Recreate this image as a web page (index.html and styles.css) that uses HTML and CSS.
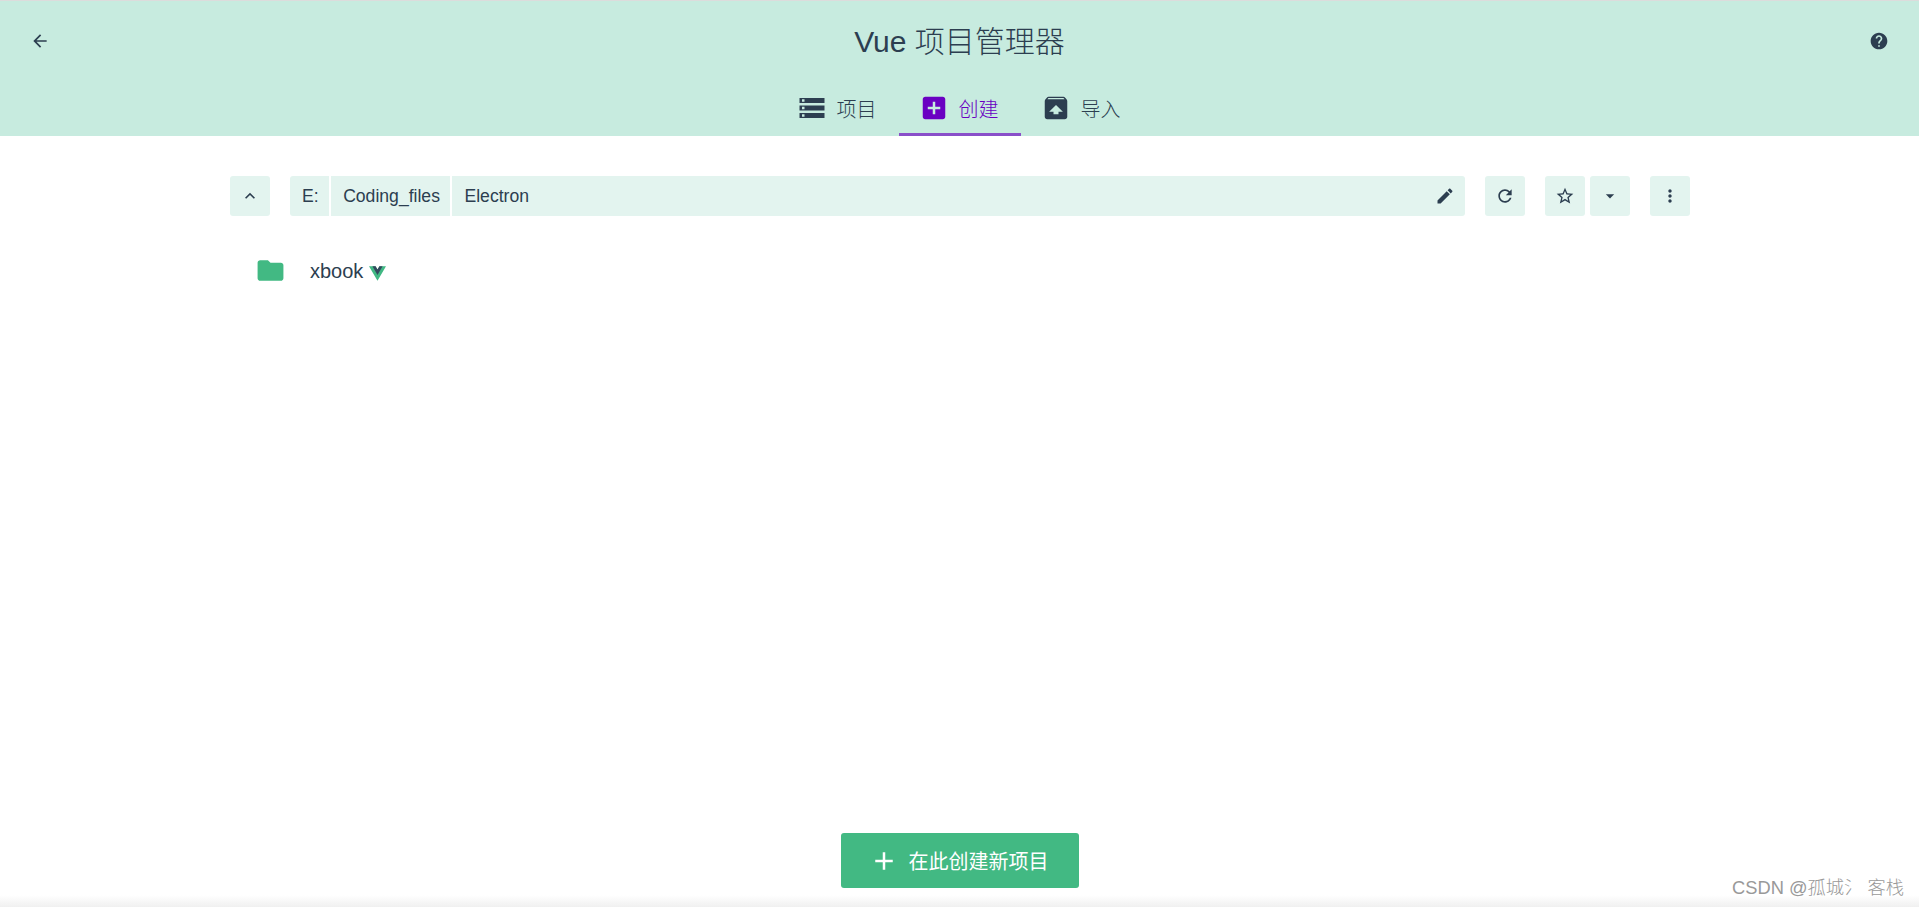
FILE: index.html
```html
<!DOCTYPE html>
<html lang="en">
<head>
  <meta charset="UTF-8">
  <title>Vue 项目管理器</title>
  <link rel="stylesheet" href="styles.css">
</head>
<body>

<div class="page">
  <header class="header">
    <div class="title-row">
      <svg class="icon-20" viewBox="0 0 24 24"><path d="M20 11H7.83l5.59-5.59L12 4l-8 8 8 8 1.41-1.41L7.83 13H20v-2z"/></svg>
      <h1>Vue 项目管理器</h1>
      <svg class="icon-20" viewBox="0 0 24 24"><path d="M12 2C6.48 2 2 6.48 2 12s4.48 10 10 10 10-4.48 10-10S17.52 2 12 2zm1 17h-2v-2h2v2zm2.07-7.75l-.9.92C13.45 12.9 13 13.5 13 15h-2v-.5c0-1.1.45-2.1 1.17-2.83l1.24-1.26c.37-.36.59-.86.59-1.41 0-1.1-.9-2-2-2s-2 .9-2 2H8c0-2.21 1.79-4 4-4s4 1.79 4 4c0 .88-.36 1.68-.93 2.25z"/></svg>
    </div>
    <nav class="tabs">
      <div class="tab">
        <svg class="tab-icon" viewBox="0 0 24 24"><path d="M2 20h20v-4H2v4zm2-3h2v2H4v-2zM2 4v4h20V4H2zm4 3H4V5h2v2zm-4 7h20v-4H2v4zm2-3h2v2H4v-2z"/></svg>
        <span>项目</span>
      </div>
      <div class="tab active">
        <svg class="tab-icon" viewBox="0 0 24 24"><path d="M19 3H5c-1.11 0-2 .9-2 2v14c0 1.1.89 2 2 2h14c1.1 0 2-.9 2-2V5c0-1.1-.9-2-2-2zm-2 10h-4v4h-2v-4H7v-2h4V7h2v4h4v2z"/></svg>
        <span>创建</span>
      </div>
      <div class="tab">
        <svg class="tab-icon" viewBox="0 0 24 24"><path d="M20.55 5.22l-1.39-1.68C18.88 3.21 18.47 3 18 3H6c-.47 0-.88.21-1.15.55L3.46 5.22C3.17 5.57 3 6.01 3 6.5V19c0 1.1.89 2 2 2h14c1.1 0 2-.9 2-2V6.5c0-.49-.17-.93-.45-1.28zM12 9.5l5.5 5.5H14v2h-4v-2H6.5L12 9.5zM5.12 5l.82-1h12l.93 1H5.12z"/></svg>
        <span>导入</span>
      </div>
    </nav>
  </header>

  <main class="content">
    <div class="toolbar">
      <div class="btn">
        <svg class="icon-20" viewBox="0 0 24 24"><path d="M7.41 15.41L12 10.83l4.59 4.58L18 14l-6-6-6 6z"/></svg>
      </div>
      <div class="path-bar">
        <div class="crumb first">E:</div>
        <div class="crumb">Coding_files</div>
        <div class="crumb last">
          <span>Electron</span>
          <svg class="icon-20" viewBox="0 0 24 24"><path d="M3 17.25V21h3.75L17.81 9.94l-3.75-3.75L3 17.25zM20.71 7.04c.39-.39.39-1.02 0-1.41l-2.34-2.34c-.39-.39-1.02-.39-1.41 0l-1.83 1.83 3.75 3.75 1.83-1.83z"/></svg>
        </div>
      </div>
      <div class="btn">
        <svg class="icon-20" viewBox="0 0 24 24"><path d="M17.65 6.35C16.2 4.9 14.21 4 12 4c-4.42 0-7.99 3.58-7.99 8s3.57 8 7.99 8c3.73 0 6.84-2.55 7.73-6h-2.08c-.82 2.33-3.04 4-5.65 4-3.31 0-6-2.69-6-6s2.69-6 6-6c1.66 0 3.14.69 4.22 1.78L13 11h7V4l-2.35 2.35z"/></svg>
      </div>
      <div class="btn-group">
        <div class="btn">
          <svg class="icon-20" viewBox="0 0 24 24"><path d="M22 9.24l-7.19-.62L12 2 9.19 8.63 2 9.24l5.46 4.73L5.82 21 12 17.27 18.18 21l-1.63-7.03L22 9.24zM12 15.4l-3.76 2.27 1-4.28-3.32-2.88 4.38-.38L12 6.1l1.71 4.04 4.38.38-3.32 2.88 1 4.28L12 15.4z"/></svg>
        </div>
        <div class="btn">
          <svg class="icon-20" viewBox="0 0 24 24"><path d="M7 10l5 5 5-5z"/></svg>
        </div>
      </div>
      <div class="btn">
        <svg class="icon-20" viewBox="0 0 24 24"><path d="M12 8c1.1 0 2-.9 2-2s-.9-2-2-2-2 .9-2 2 .9 2 2 2zm0 2c-1.1 0-2 .9-2 2s.9 2 2 2 2-.9 2-2-.9-2-2-2zm0 6c-1.1 0-2 .9-2 2s.9 2 2 2 2-.9 2-2-.9-2-2-2z"/></svg>
      </div>
    </div>

    <div class="folder-row">
      <svg class="folder-icon" viewBox="0 0 24 24"><path d="M10 4H4c-1.1 0-1.99.9-1.99 2L2 18c0 1.1.9 2 2 2h16c1.1 0 2-.9 2-2V8c0-1.1-.9-2-2-2h-8l-2-2z"/></svg>
      <span class="folder-name">xbook</span>
      <svg class="vue-logo" viewBox="0 0 261.76 226.69">
        <path fill="#41b883" d="M161.096.001l-30.225 52.351L100.647.001H-.005l130.876 226.688L261.749.001z"/>
        <path fill="#34495e" d="M161.096.001l-30.225 52.351L100.647.001H52.346l78.525 136.01L209.398.001z"/>
      </svg>
    </div>
  </main>

  <footer class="footer">
    <div class="create-btn">
      <svg class="create-icon" viewBox="0 0 24 24"><path d="M19 13h-6v6h-2v-6H5v-2h6V5h2v6h6v2z"/></svg>
      <span>在此创建新项目</span>
    </div>
  </footer>

  <div class="watermark">CSDN @孤城氵 客栈</div>
</div>

</body>
</html>
```

FILE: styles.css
```css
* {
  box-sizing: border-box;
}
html, body {
  height: 100%;
  margin: 0;
}
body {
  font-family: "Liberation Sans", "Noto Sans CJK SC", sans-serif;
  font-weight: 300;
  color: #2c3e50;
  background: white;
  overflow: hidden;
}
svg {
  fill: currentColor;
  display: block;
  flex: none;
}
.icon-20 {
  width: 20px;
  height: 20px;
}
.page {
  position: relative;
  height: 100vh;
  display: flex;
  flex-direction: column;
}

.header {
  background: #c7ebdf;
  border-top: 1px solid #dcdcdc;
  height: 136px;
  flex: none;
}
.title-row {
  height: 80px;
  padding: 0 30px;
  display: flex;
  align-items: center;
  justify-content: space-between;
}
h1 {
  margin: 0 0 4px;
  font-size: 30px;
  font-weight: 300;
}
.tabs {
  display: flex;
  justify-content: center;
  height: 55px;
}
.tab {
  width: 122px;
  padding: 2px 22px 0 20px;
  display: flex;
  align-items: center;
  gap: 10px;
  font-size: 20px;
  border-bottom: 3px solid transparent;
}
.tab-icon {
  width: 30px;
  height: 30px;
}
.tab.active {
  color: #6a00c2;
  border-bottom-color: #8a4fc9;
}

.content {
  flex: 1;
  padding: 40px 229px 0 230px;
}
.toolbar {
  display: flex;
  gap: 20px;
}
.btn {
  width: 40px;
  height: 40px;
  background: #e3f4ef;
  border-radius: 3px;
  display: flex;
  align-items: center;
  justify-content: center;
  flex: none;
}
.btn-group {
  display: flex;
  gap: 5px;
}
.path-bar {
  flex: 1;
  display: flex;
  gap: 2px;
}
.crumb {
  background: #e3f4ef;
  height: 40px;
  padding: 0 10.5px 0 12px;
  font-size: 17.6px;
  display: flex;
  align-items: center;
}
.crumb.first {
  border-radius: 3px 0 0 3px;
}
.crumb.last {
  flex: 1;
  justify-content: space-between;
  padding-right: 10px;
  border-radius: 0 3px 3px 0;
}

.folder-row {
  display: flex;
  align-items: center;
  height: 31px;
  margin-top: 39px;
  padding-left: 25px;
}
.folder-icon {
  width: 31px;
  height: 31px;
  color: #42b983;
}
.folder-name {
  margin: 1px 0 0 24px;
  font-size: 20px;
}
.vue-logo {
  width: 17px;
  height: 15px;
  margin: 6px 0 0 6px;
}

.footer {
  flex: none;
  height: 74px;
  display: flex;
  justify-content: center;
  background: linear-gradient(to bottom, white 84%, #f0f0f0);
}
.create-btn {
  width: 238px;
  height: 55px;
  background: #42b983;
  border-radius: 3px;
  color: white;
  font-size: 20px;
  font-weight: 400;
  display: flex;
  align-items: center;
  gap: 15px;
  padding-left: 28px;
}
.create-icon {
  width: 30px;
  height: 30px;
  margin-right: -5px;
}

.watermark {
  position: absolute;
  right: 15px;
  bottom: 8px;
  font-size: 18.3px;
  color: #999;
  text-shadow: 1px 1px 1px white;
}
```
